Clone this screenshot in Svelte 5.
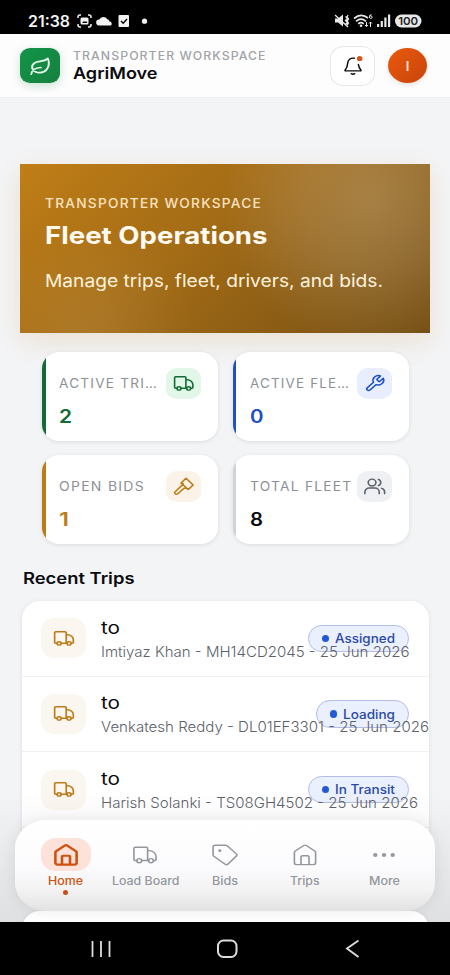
<script>
  // Stretches a label horizontally so that it takes up `width` pixels.
  function fit(node, width) {
    const natural = node.getBoundingClientRect().width;
    node.style.transform = `scaleX(${width / natural})`;
    node.style.marginRight = `${width - natural}px`;
  }

  const stats = [
    { label: 'ACTIVE TRI…', w: 99, value: '2', vw: 13, icon: 'truck', tone: 'green' },
    { label: 'ACTIVE FLE…', w: 100, value: '0', vw: 13.5, icon: 'wrench', tone: 'blue' },
    { label: 'OPEN BIDS', w: 86, value: '1', vw: 10, icon: 'gavel', tone: 'amber' },
    { label: 'TOTAL FLEET', w: 102.5, value: '8', vw: 13, icon: 'users', tone: 'gray' }
  ];

  const trips = [
    { info: 'Imtiyaz Khan - MH14CD2045 - 25 Jun 2026', w: 308.5, status: 'Assigned', sw: 60 },
    { info: 'Venkatesh Reddy - DL01EF3301 - 25 Jun 2026', w: 328, status: 'Loading', sw: 52 },
    { info: 'Harish Solanki - TS08GH4502 - 25 Jun 2026', w: 317, status: 'In Transit', sw: 60 }
  ];

  const tabs = [
    { label: 'Home', w: 35, icon: 'home', active: true },
    { label: 'Load Board', w: 67.5, icon: 'truck' },
    { label: 'Bids', w: 26, icon: 'tag' },
    { label: 'Trips', w: 29.5, icon: 'home' },
    { label: 'More', w: 31, icon: 'more' }
  ];
</script>

{#snippet icon(name)}
  <svg class="icon" viewBox="0 0 24 24" preserveAspectRatio="none" fill="none" stroke="currentColor" stroke-linecap="round" stroke-linejoin="round">
    {#if name === 'truck'}
      <path d="M4.3 18H3a1.2 1.2 0 0 1-1.2-1.2V4.7A1.2 1.2 0 0 1 3 3.5h10.2a1.2 1.2 0 0 1 1.2 1.2V18M9 18h6.3M19.8 18H21a1.2 1.2 0 0 0 1.2-1.2v-3.3c0-3.2-3-6.3-6.2-6.3h-1.6" />
      <circle cx="6.7" cy="18.2" r="2.2" /><circle cx="17.5" cy="18.2" r="2.2" />
    {:else if name === 'wrench'}
      <path d="M14.7 6.3a1 1 0 0 0 0 1.4l1.6 1.6a1 1 0 0 0 1.4 0l3.8-3.8a6 6 0 0 1-7.9 7.9l-6.9 6.9a2.1 2.1 0 0 1-3-3l6.9-6.9a6 6 0 0 1 7.9-7.9z" />
    {:else if name === 'gavel'}
      <path d="m14.5 1.5 8 8.5-5.5 5.8-8-8.3ZM11 9.5l-8.6 9a2 2 0 0 0 0 2.8 2 2 0 0 0 2.9 0L14 12.6M9 7.5l2.5 1.3M17 15.8l-2.5-2.6" />
    {:else if name === 'users'}
      <circle cx="9" cy="7" r="4.3" /><path d="M1 21v-2.2A4.8 4.8 0 0 1 5.8 14h6.4a4.8 4.8 0 0 1 4.8 4.8V21M16 3a4.3 4.3 0 0 1 0 8M23 21v-2.2a4.8 4.8 0 0 0-3.4-4.5" />
    {:else if name === 'home'}
      <path d="M2.2 9.3c0-.7.3-1.2.8-1.6l7.8-6a2 2 0 0 1 2.4 0l7.8 6c.5.4.8.9.8 1.6V20.5a2 2 0 0 1-2 2H4.2a2 2 0 0 1-2-2ZM8.3 22.5v-8.3a1.4 1.4 0 0 1 1.4-1.4h4.6a1.4 1.4 0 0 1 1.4 1.4V22.5" />
    {:else if name === 'tag'}
      <path d="M1 3.2A1.9 1.9 0 0 1 2.9 1.3h9.3c.7 0 1.3.2 1.8.7l8.3 8.5c.8.8.8 2 0 2.8l-7.5 8.5c-.8.9-2.1.9-3 .1L1.7 13.4a2.2 2.2 0 0 1-.7-1.6Z" />
      <circle cx="7.2" cy="7.3" r=".7" fill="currentColor" />
    {:else if name === 'more'}
      <g fill="currentColor" stroke="none"><circle cx="3.3" cy="12" r="2.2" /><circle cx="12" cy="12" r="2.2" /><circle cx="20.7" cy="12" r="2.2" /></g>
    {:else if name === 'leaf'}
      <path d="M1.5 23c.4-4.500 3.500-8.500 11.500-9M8 20.300C1.500 18 1 11 5.500 8 10 5 16 7 21.500 2c3.500 11-2.500 21.500-13.500 18.300Z" />
    {:else if name === 'bell'}
      <path d="M13.6 2.800C9 2 5.800 5 5.600 9c-.1 4-1.200 6.500-3 8.600-.5.6-.2 1.200.6 1.200h17.600c.8 0 1.100-.6.6-1.200-1.500-1.800-2.500-3.800-2.900-6.800M10 22.300c1.200.9 2.800.9 4 0" />
      <circle cx="20" cy="3.300" r="3.300" fill="#d9531e" stroke="none" />
    {/if}
  </svg>
{/snippet}

<div class="screen">
  <div class="status">
    <span class="clock"><span class="fit" use:fit={42}>21:38</span></span>
    <svg width="75" height="14" viewBox="0 0 75 14" fill="#f2f2f2">
      <path d="M1 4V3q0-2 2-2h1M11 1h1q2 0 2 2v1M14 10v1q0 2-2 2h-1M4 13H3q-2 0-2-2v-1" fill="none" stroke="#f2f2f2" stroke-width="1.5" />
      <rect x="3.5" y="3.5" width="8" height="7" rx="1.5" /><path d="m5 9 2-2 1 1 1-1 1.5 2Z" fill="#000" />
      <path d="M22 11.5a3 3 0 0 1 .3-6 4.500 4.500 0 0 1 8-.2c1.500.1 2 1.500 2 2.200a2.200 2.200 0 0 1 1.500 4Z" />
      <rect x="41.5" y="1" width="10.5" height="12" rx="1" /><path d="m44 7 2.200 2.200L50 5" fill="none" stroke="#000" stroke-width="1.4" />
      <circle cx="67.5" cy="7.2" r="2.6" />
    </svg>
    <svg class="signals" width="88" height="16" viewBox="0 0 88 16" fill="#e8e8e8">
      <path d="M1 5.5h3L9 1.5v12l-5-4H1Z" /><path d="m1 2 13 12M11.5 3.5l2 2-2 2 2 2-2 2M14 2l-1 2 1.5 2L13 8l1.5 2-1.5 2" fill="none" stroke="#e8e8e8" stroke-width="1.3" />
      <g fill="none" stroke="#e8e8e8" stroke-width="1.7"><path d="M20 5.5q7-6.2 14-.5M22 8.3q5-4.3 10 0M24.2 10.8q2.8-2.2 5.5 0" /></g><circle cx="27" cy="12.7" r="1.3" />
      <path d="M32.5 9v4.5M31 12l1.5 1.6L34 12M36.500 14V9M35 10.500 36.500 9l1.500 1.500M37.500 1.700q-2-.5-2 2.300a1.300 1.300 0 1 0 1.300-1.100h-1" fill="none" stroke="#e8e8e8" stroke-width="1" />
      <rect x="43" y="11" width="2.2" height="3" /><rect x="46.7" y="8" width="2.2" height="6" /><rect x="50.3" y="4.5" width="2.2" height="9.5" /><rect x="54" y="1.5" width="2.2" height="12.5" />
      <rect x="61" y="1.5" width="26.5" height="13" rx="6.5" /><text x="74.2" y="12.1" text-anchor="middle" fill="#222" font-size="11" font-weight="600" textLength="20" lengthAdjust="spacingAndGlyphs">100</text>
    </svg>
  </div>

  <header>
    <div class="logo">{@render icon('leaf')}</div>
    <div class="brand">
      <div class="over"><span class="fit" use:fit={193.5}>TRANSPORTER WORKSPACE</span></div>
      <div class="name"><span class="fit" use:fit={84.5}>AgriMove</span></div>
    </div>
    <div class="bell">{@render icon('bell')}</div>
    <div class="avatar">I</div>
  </header>

  <main>
    <section class="hero">
      <div class="h-over"><span class="fit" use:fit={217}>TRANSPORTER WORKSPACE</span></div>
      <h1><span class="fit" use:fit={222.5}>Fleet Operations</span></h1>
      <p><span class="fit" use:fit={338}>Manage trips, fleet, drivers, and bids.</span></p>
    </section>

    <section class="stats">
      {#each stats as s}
        <div class="stat {s.tone}">
          <div class="top">
            <span class="fit" use:fit={s.w}>{s.label}</span>
            <div class="chip">{@render icon(s.icon)}</div>
          </div>
          <div class="value"><span class="fit" use:fit={s.vw}>{s.value}</span></div>
        </div>
      {/each}
    </section>

    <h2><span class="fit" use:fit={111.5}>Recent Trips</span></h2>

    <section class="list">
      {#each trips as t}
        <div class="row">
          <div class="tile">{@render icon('truck')}</div>
          <div class="info">
            <div class="route"><span class="fit" use:fit={19}>to</span></div>
            <div class="meta"><span class="fit" use:fit={t.w}>{t.info}</span></div>
          </div>
          <div class="badge"><i></i><span class="fit" use:fit={t.sw}>{t.status}</span></div>
        </div>
      {/each}
      <div class="row"></div>
    </section>
    <section class="list next"></section>
  </main>

  <div class="haze"></div>
  <nav>
    {#each tabs as t}
      <div class="tab" class:active={t.active}>
        <div class="pill {t.icon}">{@render icon(t.icon)}</div>
        <div class="tlabel"><span class="fit" use:fit={t.w}>{t.label}</span></div>
        {#if t.active}<i></i>{/if}
      </div>
    {/each}
  </nav>

  <div class="system">
    <svg width="20" height="18" viewBox="0 0 20 18" stroke="#ddd" stroke-width="1.8"><path d="M1.5 1v16M10 1v16M18.5 1v16" /></svg>
    <svg width="22" height="20" viewBox="0 0 22 20" fill="none" stroke="#ddd" stroke-width="2"><rect x="1" y="1.5" width="18.5" height="16.5" rx="5.5" /></svg>
    <svg width="15" height="20" viewBox="0 0 15 20" fill="none" stroke="#ddd" stroke-width="1.9"><path d="M13.5 1.5 2 9.5l11.500 8.500" /></svg>
  </div>
</div>

<style>
  :global(body) { margin: 0; }
  .screen {
    position: relative; width: 450px; height: 975px; overflow: hidden;
    background: #f3f4f6; color: #0b0c0f; font-family: Inter, "Noto Sans", sans-serif;
    box-sizing: border-box; display: flex; flex-direction: column;
  }
  .screen * { box-sizing: border-box; }
  .fit { display: inline-block; white-space: pre; transform-origin: 0 50%; }
  .icon { display: block; overflow: visible; flex: none; stroke-width: 1.8; }
  h1, h2, p { margin: 0; }

  .status { height: 34px; flex: none; background: #000; color: #f2f2f2; display: flex; align-items: center; padding: 8px 28px 0; }
  .clock { font-size: 15.5px; font-weight: 600; line-height: 26px; margin-right: 7px; position: relative; top: 1px; }
  .signals { margin-left: auto; }

  header { height: 64px; flex: none; background: #fdfdfd; border-bottom: 1px solid #eceef0; display: flex; align-items: center; padding: 0 23px 0 20px; }
  .logo { width: 40px; height: 35px; border-radius: 10px / 9px; background: linear-gradient(135deg, #129549, #16803f); color: #e6fbe9; box-shadow: 0 3px 10px #16803f38; display: flex; align-items: center; justify-content: center; }
  .logo .icon { width: 20px; height: 18px; stroke-width: 2.3; }
  .brand { margin-left: 13px; flex: 1; }
  .over { font-size: 11.3px; line-height: 14px; font-weight: 500; color: #a0a3a8; letter-spacing: 1px; }
  .name { font-size: 16px; line-height: 20px; font-weight: 600; }
  .bell { width: 45px; height: 40px; border: 1px solid #e6e7ea; border-radius: 14px / 12px; background: #fff; display: flex; align-items: center; justify-content: center; }
  .bell .icon { width: 20px; height: 19px; }
  .avatar { width: 39px; height: 35px; margin-left: 13px; border-radius: 50%; background: linear-gradient(135deg, #e95a0c, #c8440c); color: #ffe8d8; font-size: 13px; font-weight: 600; display: flex; align-items: center; justify-content: center; box-shadow: 0 2px 5px #0000001c; }

  main { padding: 66.4px 20px 0; flex: none; }
  .hero { height: 169px; padding: 31px 25px 0; color: #fffaf0;
    background: radial-gradient(circle at 86% 22%, #ffffff34 0, #ffffff22 18%, transparent 40%), radial-gradient(circle at 17% 100%, #ffffff14, transparent 28%), linear-gradient(135deg, #bf7e17 0%, #a46c16 42%, #744e13 100%);
    box-shadow: 0 8px 24px #c0801a2a; }
  .h-over { font-size: 13px; line-height: 16px; font-weight: 500; letter-spacing: 1.2px; color: #fbe3c1; }
  h1 { font-size: 24px; line-height: 30px; font-weight: 700; margin-top: 10px; }
  p { font-size: 17.5px; line-height: 24px; margin-top: 17.5px; font-weight: 400; color: #fff3df; }

  .stats { display: grid; grid-template-columns: 176px 176px; gap: 14px 15px; padding: 18.7px 0 0 21.5px; }
  .stat { height: 89px; border-radius: 18px / 16px; background: linear-gradient(90deg, var(--c) 0 3.5px, #fff 3.5px); box-shadow: 0 1px 4px #1018281c; padding: 15.6px 17px 0 17.5px; }
  .top { display: flex; align-items: center; justify-content: space-between; height: 31px; font-size: 13px; letter-spacing: 1.2px; color: #8d9196; }
  .chip { width: 34.5px; height: 31px; flex: none; border-radius: 11px / 10px; display: flex; align-items: center; justify-content: center; background: var(--bg); color: var(--c); }
  .chip .icon { width: 21.5px; height: 19px; }
  .value { font-size: 18px; line-height: 22px; margin-top: 7px; font-weight: 600; color: var(--c); }
  .green { --c: #126b37; --bg: #e3f7e9; }
  .blue { --c: #1c50c4; --bg: #e8eefd; }
  .amber { --c: #bd7b18; --bg: #fbf3e7; }
  .gray { --c: #d0d2d6; --bg: #eff0f3; }
  .gray .chip { color: #5c616b; }
  .gray .value { color: #0b0c0f; }

  h2 { font-size: 16px; line-height: 20px; font-weight: 600; padding: 24px 0 0 3px; }
  .list { margin: 12.8px 1px 0 1.5px; background: #fff; border-radius: 18px; box-shadow: 0 1px 5px #10182818; }
  .row { height: 75.7px; display: flex; align-items: flex-start; padding: 17.3px 20px 0 19.5px; border-bottom: 1px solid #eff0f2; }
  .tile { width: 45px; height: 40px; flex: none; border-radius: 13px; background: #fbf6ef; color: #bd7b18; display: flex; align-items: center; justify-content: center; }
  .tile .icon { width: 22px; height: 19px; }
  .info { margin-left: 15px; margin-top: -1.4px; flex: 1; min-width: 0; position: relative; z-index: 1; white-space: nowrap; }
  .route { font-size: 17px; line-height: 22px; font-weight: 400; }
  .meta { font-size: 14.5px; line-height: 18px; font-weight: 300; color: #5d6269; margin-top: 4px; }
  .badge { flex: none; margin-top: 6.4px; height: 27.5px; border: 1px solid #b3bde6; border-radius: 14px; background: #eaf0fe; color: #2b49a6; font-size: 12.5px; font-weight: 500; padding: 0 13px 0 12.5px; display: flex; align-items: center; }
  .badge i { width: 7.5px; height: 7.5px; border-radius: 50%; background: #2459d5; margin-right: 6px; }
  .next { height: 80px; margin-top: 7px; position: relative; z-index: 1; }

  .haze { position: absolute; left: 0; right: 0; top: 790px; height: 132px; background: linear-gradient(#55555500, #55555508 25%, #5555551a 80%, #55555520); }
  nav { position: absolute; z-index: 2; left: 15px; top: 820px; width: 420px; height: 90.5px; border-radius: 31px / 28px; background: linear-gradient(#fff 0, #fcfcfe 50%, #f3f3f4 76%, #e2e2e3 100%); display: flex; padding: 18px 11px 0; box-shadow: 0 0 16px #00000016; }
  .tab { flex: 1; display: flex; flex-direction: column; align-items: center; color: #94979e; }
  .pill { width: 50px; height: 33px; border-radius: 15px / 14px; display: flex; align-items: center; justify-content: center; }
  .pill .icon { width: 26px; height: 22px; stroke-width: 1.5; }
  .pill.more .icon { width: 24px; }
  .active { color: #d0500f; }
  .active .pill { background: #fce2d9; }
  .tab.active .icon { stroke-width: 2.4; }
  .tlabel { font-size: 11.3px; line-height: 14px; font-weight: 500; margin-top: 3px; }
  .tab i { width: 5px; height: 5px; border-radius: 50%; background: #c94e16; margin-top: 1.5px; }

  .system { position: absolute; z-index: 3; left: 0; right: 0; bottom: 0; height: 53px; background: #000; display: flex; align-items: center; justify-content: space-between; padding: 1px 90px 0 91px; }
</style>
